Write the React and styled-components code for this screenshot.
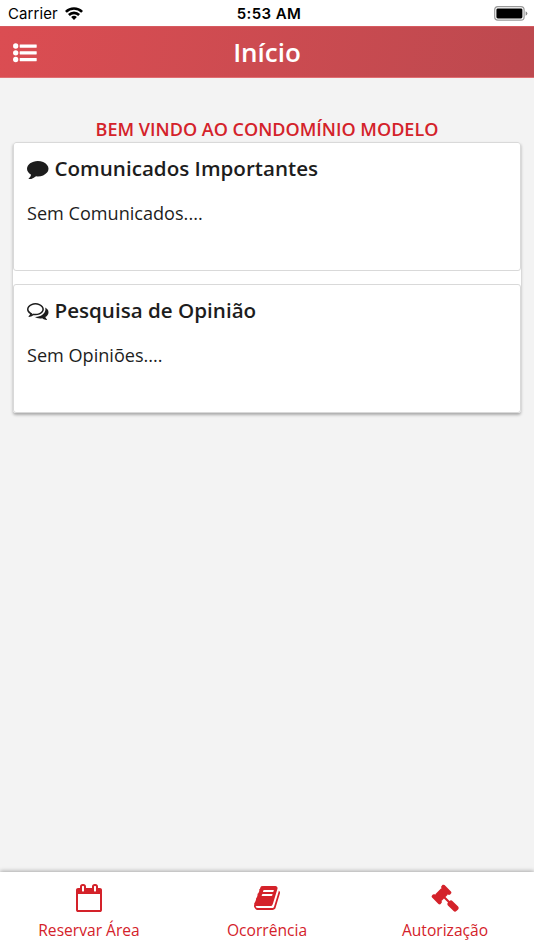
import React from 'react';
import styled, { createGlobalStyle } from 'styled-components';

const Global = createGlobalStyle`
  * { box-sizing: border-box; }
  body { margin: 0; background: #f3f3f3; font-family: "Open Sans", sans-serif; color: #1d1d1d; }
`;
const Screen = styled.div`
  height: 950px;
  display: flex;
  flex-direction: column;
  overflow: hidden;
`;
const StatusBar = styled.div`
  height: 26px;
  flex: none;
  display: grid;
  grid-template-columns: 1fr auto 1fr;
  align-items: center;
  padding: 1px 6px 0 8px;
  background: #fff;
  color: #000;
  font: 400 15px/24px Inter, sans-serif;
`;
const Carrier = styled.div`
  display: flex;
  align-items: center;
  gap: 7px;
  padding-top: 1px;
  letter-spacing: 0.1px;

  svg {
    margin-top: -2px;
  }
`;
const Clock = styled.div`
  padding: 1px 0 0 2px;
  font-weight: 600;
  letter-spacing: 0.4px;
`;
const BatterySvg = styled.svg`
  display: block;
  justify-self: end;
`;
const Header = styled.header`
  height: 52px;
  flex: none;
  display: grid;
  grid-template-columns: 60px 1fr 60px;
  align-items: center;
  background: linear-gradient(100deg, #db4d52, #bd494f);
  border-top: 1px solid #d65a60;
  border-bottom: 1px solid #e06e72;
  color: #fff;
`;
const MenuButton = styled.button`
  border: 0;
  background: none;
  padding: 2px 0 0 13px;
  display: flex;
  color: inherit;
`;
const Title = styled.h1`
  margin: 0;
  text-align: center;
  font-size: 26px;
  line-height: 50px;
  font-weight: 600;
`;
const Main = styled.main`
  flex: 1;
  padding: 38px 13px 0;
`;
const Welcome = styled.h2`
  margin: 0;
  height: 26px;
  text-align: center;
  font-size: 18.05px;
  line-height: 26px;
  font-weight: 600;
  color: #d4222a;
  white-space: nowrap;
`;
const Panel = styled.section`
  display: grid;
  gap: 13px;
  background: #fff;
  border-radius: 3px;
  box-shadow: 0 2px 3px rgba(0, 0, 0, 0.3);
`;
const Card = styled.article`
  height: 129px;
  padding: 11px 13px;
  border: 1px solid #d9d9d9;
  border-radius: 3px;
  background: #fff;
`;
const CardTitle = styled.h3`
  margin: 0;
  display: flex;
  align-items: center;
  gap: 6px;
  font-size: 20.6px;
  line-height: 28px;
  font-weight: 600;

  svg {
    margin-top: 1px;
  }
`;
const CardText = styled.p`
  margin: 18px 0 0;
  font-size: 18.1px;
  line-height: 26px;
`;
const Tabs = styled.nav`
  height: 78px;
  flex: none;
  display: grid;
  grid-template-columns: repeat(3, 1fr);
  background: #fff;
  box-shadow: 0 -1px 4px rgba(0, 0, 0, 0.3);
`;
const Tab = styled.a`
  display: flex;
  flex-direction: column;
  align-items: center;
  padding-top: 12px;
  color: #d4222a;
  font-size: 15.6px;
  line-height: 22px;
`;
const TabLabel = styled.span`
  margin-top: 7px;
`;
const Glyph = styled.svg`
  display: block;
  flex: none;
  width: ${(p) => p.$size}px;
  height: ${(p) => p.$size}px;
  fill: currentColor;
`;

const paths = {
  comment: 'M1792 896q0 174-120 321.5t-326 233-450 85.5q-70 0-145-8-198 175-460 242-49 14-114 22-17 2-30.5-9t-17.5-29v-1q-3-4-.5-12t2-10 4.5-9.5l6-9 7-8.5 8-9q7-8 31-34.5t34.5-38 31-39.5 32.5-51 27-59 26-76q-157-89-247.5-220t-90.5-281q0-130 71-248.5t191-204.5 286-136.5 348-50.5q244 0 450 85.5t326 233 120 321.5z',
  comments: 'M704 384q-153 0-286 52t-211.5 141-78.5 191q0 82 53 158t149 132l97 56-35 84q34-20 62-39l44-31 53 10q78 14 153 14 153 0 286-52t211.5-141 78.5-191-78.5-191-211.5-141-286-52zm0-128q191 0 353.5 68.5t256.5 186.5 94 257-94 257-256.5 186.5-353.5 68.5q-86 0-176-16-124 88-278 128-36 9-86 16h-3q-11 0-20.5-8t-11.5-21q-1-3-1-6.5t.5-6.5 2-6l2.5-5 3.5-5.5 4-5 4.5-5 4-4.5q5-6 23-25t26-29.5 22.5-29 25-38.5 20.5-44q-124-72-195-177t-71-224q0-139 94-257t256.5-186.5 353.5-68.5zm822 1169q10 24 20.5 44t25 38.5 22.5 29 26 29.5 23 25q1 1 4 4.5t4.5 5 4 5 3.5 5.5l2.5 5 2 6 .5 6.5-1 6.5q-3 14-13 22t-22 7q-50-7-86-16-154-40-278-128-90 16-176 16-271 0-472-132 58 4 88 4 161 0 309-45t264-129q125-92 192-212t67-254q0-77-23-152 129 71 204 178t75 230q0 120-71 224.5t-195 176.5z',
  calendar: 'M192 1664h1408v-1024h-1408v1024zm384-1216v-288q0-14-9-23t-23-9h-64q-14 0-23 9t-9 23v288q0 14 9 23t23 9h64q14 0 23-9t9-23zm768 0v-288q0-14-9-23t-23-9h-64q-14 0-23 9t-9 23v288q0 14 9 23t23 9h64q14 0 23-9t9-23zm384-64v1280q0 52-38 90t-90 38h-1408q-52 0-90-38t-38-90v-1280q0-52 38-90t90-38h128v-96q0-66 47-113t113-47h64q66 0 113 47t47 113v96h384v-96q0-66 47-113t113-47h64q66 0 113 47t47 113v96h128q52 0 90 38t38 90z',
  book: 'M1703 478q40 57 18 129l-275 906q-19 64-76.5 107.5t-122.5 43.5h-923q-77 0-148.5-53.5t-99.5-131.5q-24-67-2-127 0-4 3-27t4-37q1-8-3-21.5t-3-19.5q2-11 8-21t16.5-23.5 16.5-23.5q23-38 45-91.5t30-91.5q3-10 .5-30t-.5-28q3-11 17-28t17-23q21-36 42-92t25-90q1-9-2.5-32t.5-28q4-13 22-30.5t22-22.5q19-26 42.5-84.5t27.5-96.5q1-8-3-25.5t-2-26.5q2-8 9-18t18-23 17-21q8-12 16.5-30.5t15-35 16-36 19.5-32 26.5-23.5 36-11.5 47.5 5.5l-1 3q38-9 51-9h761q74 0 114 56t18 130l-274 906q-36 119-71.5 153.5t-128.5 34.5h-869q-27 0-38 15-11 16-1 43 24 70 144 70h923q29 0 56-15.5t35-41.5l300-987q7-22 5-57 38 15 59 43zm-1064 2q-4 13 2 22.5t20 9.5h608q13 0 25.5-9.5t16.5-22.5l21-64q4-13-2-22.5t-20-9.5h-608q-13 0-25.5 9.5t-16.5 22.5zm-83 256q-4 13 2 22.5t20 9.5h608q13 0 25.5-9.5t16.5-22.5l21-64q4-13-2-22.5t-20-9.5h-608q-13 0-25.5 9.5t-16.5 22.5z',
  gavel: 'M1771 1536q0 53-37 90l-107 108q-39 37-91 37-53 0-90-37l-363-364q-38-36-38-90 0-53 43-96l-256-256-126 126q-14 14-34 14t-34-14q2 2 12.5 12t12.5 13 10 11.5 10 13.5 6 13.5 5.5 16.5 1.5 18q0 38-28 68-3 3-16.5 18t-19 20.5-18.5 16.5-22 15.5-22 9-26 4.5q-40 0-68-28l-408-408q-28-28-28-68 0-13 4.5-26t9-22 15.5-22 16.5-18.5 20.5-19 18-16.5q30-28 68-28 10 0 18 1.5t16.5 5.5 13.5 6 13.5 10 11.5 10 13 12.5 12 12.5q-14-14-14-34t14-34l348-348q14-14 34-14t34 14q-2-2-12.5-12t-12.5-13-10-11.5-10-13.5-6-13.5-5.5-16.5-1.5-18q0-38 28-68 3-3 16.5-18t19-20.5 18.5-16.5 22-15.5 22-9 26-4.5q40 0 68 28l408 408q28 28 28 68 0 13-4.5 26t-9 22-15.5 22-16.5 18.5-20.5 19-18 16.5q-30 28-68 28-10 0-18-1.5t-16.5-5.5-13.5-6-13.5-10-11.5-10-13-12.5-12-12.5q14 14 14 34t-14 34l-126 126 256 256q43-43 96-43 52 0 91 37l363 363q37 39 37 91z',
};

const Icon = ({ name, size }) => (
  <Glyph $size={size} viewBox="0 0 1792 1792" aria-hidden="true">
    <path d={paths[name]} />
  </Glyph>
);

const Wifi = () => (
  <svg width="18" height="13" viewBox="0 0 18 13" aria-hidden="true">
    <g fill="none" stroke="#000" strokeWidth="2.6">
      <path d="M0.9 4.9a11.4 11.4 0 0 1 16.2 0" />
      <path d="M3.9 8a7.2 7.2 0 0 1 10.2 0" />
    </g>
    <path d="M9 13l-2.9-2.9a4.1 4.1 0 0 1 5.8 0z" />
  </svg>
);

const Battery = () => (
  <BatterySvg width="34" height="15" viewBox="0 0 34 15" aria-hidden="true">
    <rect x="0.7" y="0.7" width="29.4" height="13.4" rx="3.2" fill="#fff" stroke="#999" strokeWidth="1.2" />
    <rect x="2.4" y="2.4" width="26" height="10" rx="1.4" />
    <path d="M31.6 5.2q1.8 .7 1.8 2.3t-1.8 2.3z" fill="#888" />
  </BatterySvg>
);

const MenuIcon = () => (
  <svg width="24" height="20" viewBox="0 0 24 20" fill="currentColor" aria-hidden="true">
    {[3, 9.8, 16.5].map((y) => (
      <g key={y}>
        <circle cx="2.7" cy={y} r="2.65" />
        <rect x="6.7" y={y - 1.6} width="17" height="3.3" rx="0.4" />
      </g>
    ))}
  </svg>
);

const cards = [
  { icon: 'comment', title: 'Comunicados Importantes', text: 'Sem Comunicados....' },
  { icon: 'comments', title: 'Pesquisa de Opinião', text: 'Sem Opiniões....' },
];
const tabs = [
  { icon: 'calendar', label: 'Reservar Área' },
  { icon: 'book', label: 'Ocorrência' },
  { icon: 'gavel', label: 'Autorização' },
];

export default function App() {
  return (
    <Screen>
      <Global />
      <StatusBar>
        <Carrier>Carrier <Wifi /></Carrier>
        <Clock>5:53 AM</Clock>
        <Battery />
      </StatusBar>
      <Header>
        <MenuButton aria-label="Menu"><MenuIcon /></MenuButton>
        <Title>Início</Title>
      </Header>
      <Main>
        <Welcome>BEM VINDO AO CONDOMÍNIO MODELO</Welcome>
        <Panel>
          {cards.map((c) => (
            <Card key={c.icon}>
              <CardTitle><Icon name={c.icon} size={21.5} />{c.title}</CardTitle>
              <CardText>{c.text}</CardText>
            </Card>
          ))}
        </Panel>
      </Main>
      <Tabs>
        {tabs.map((t) => (
          <Tab key={t.icon}>
            <Icon name={t.icon} size={28} />
            <TabLabel>{t.label}</TabLabel>
          </Tab>
        ))}
      </Tabs>
    </Screen>
  );
}
